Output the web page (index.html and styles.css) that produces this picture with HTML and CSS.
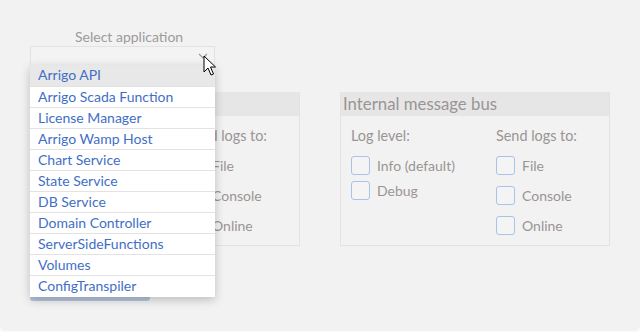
FILE: index.html
```html
<!DOCTYPE html>
<html lang="en">
<head>
    <meta charset="UTF-8">
    <title>Logging settings</title>
    <link rel="stylesheet" href="styles.css">
</head>
<body>
    <div class="page">
        <div class="app-field">
            <div class="app-label">Select application</div>
            <div class="app-select">
                <svg class="chevron" width="10" height="6" viewBox="0 0 10 6"><path d="M1 1 L5 5 L9 1" fill="none" stroke="#9a9a9a" stroke-width="1.2"/></svg>
            </div>
            <ul class="app-list">
                <li class="active">Arrigo API</li>
                <li>Arrigo Scada Function</li>
                <li>License Manager</li>
                <li>Arrigo Wamp Host</li>
                <li>Chart Service</li>
                <li>State Service</li>
                <li>DB Service</li>
                <li>Domain Controller</li>
                <li>ServerSideFunctions</li>
                <li>Volumes</li>
                <li>ConfigTranspiler</li>
            </ul>
            <svg class="cursor" width="14" height="22" viewBox="0 0 14 22"><path d="M1 1 L1 17 L5 13 L8 20 L10.5 19 L7.5 12 L12.5 12 Z" fill="#fff" stroke="#000" stroke-width="1" stroke-linejoin="round"/></svg>
        </div>

        <div class="panels">
            <div class="panel">
                <div class="panel-head">Application</div>
                <div class="panel-body">
                    <div class="col">
                        <div class="col-title">Log level:</div>
                        <label class="check tight"><span class="box"></span>Info (default)</label>
                        <label class="check tight"><span class="box"></span>Debug</label>
                    </div>
                    <div class="col">
                        <div class="col-title">Send logs to:</div>
                        <label class="check"><span class="box"></span>File</label>
                        <label class="check"><span class="box"></span>Console</label>
                        <label class="check"><span class="box"></span>Online</label>
                    </div>
                </div>
            </div>
            <div class="panel">
                <div class="panel-head">Internal message bus</div>
                <div class="panel-body">
                    <div class="col">
                        <div class="col-title">Log level:</div>
                        <label class="check tight"><span class="box"></span>Info (default)</label>
                        <label class="check tight"><span class="box"></span>Debug</label>
                    </div>
                    <div class="col">
                        <div class="col-title">Send logs to:</div>
                        <label class="check"><span class="box"></span>File</label>
                        <label class="check"><span class="box"></span>Console</label>
                        <label class="check"><span class="box"></span>Online</label>
                    </div>
                </div>
            </div>
        </div>

        <button class="save">Save</button>
    </div>
</body>
</html>
```

FILE: styles.css
```css
body {
    margin: 0;
    background: #fafafa;
    font-family: Lato, "Open Sans", sans-serif;
}
.page {
    position: relative;
    box-sizing: border-box;
    width: 640px;
    height: 331px;
    padding: 29px 30px 0;
    background: #f2f2f2;
    border-radius: 0 0 6px 6px;
}
.app-field {
    position: relative;
    width: 185px;
}
.app-label {
    padding-left: 45px;
    font-size: 14px;
    line-height: 16px;
    color: #9b9b9b;
}
.app-select {
    position: relative;
    box-sizing: border-box;
    height: 20px;
    margin-top: 1px;
    border: 1px solid #e2e2e2;
    background: #f3f3f3;
}
.chevron {
    position: absolute;
    right: 6px;
    top: 6px;
}
.app-list {
    position: absolute;
    z-index: 2;
    top: 36px;
    left: 0;
    width: 185px;
    margin: 0;
    padding: 0;
    list-style: none;
    background: #fff;
    box-shadow: 0 3px 9px rgba(0, 0, 0, 0.22);
}
.app-list li {
    height: 20px;
    padding-left: 8px;
    border-bottom: 1px solid #e3e3e3;
    font-size: 14px;
    line-height: 20px;
    color: #3f6fc6;
}
.app-list li:last-child {
    height: 21px;
    border-bottom: none;
}
.app-list li.active {
    height: 21px;
    background: #e8e8e8;
}
.cursor {
    position: absolute;
    z-index: 3;
    left: 173px;
    top: 26px;
}
.panels {
    display: flex;
    gap: 40px;
    margin-top: 26px;
}
.panel {
    width: 270px;
    border: 1px solid #e2e2e2;
    border-top: none;
}
.panel-head {
    height: 24px;
    padding-left: 2px;
    background: #e6e6e6;
    font-size: 16.8px;
    line-height: 24px;
    color: #9a9594;
}
.panel-body {
    display: flex;
    padding: 12px 10px 11px;
}
.col {
    display: flex;
    flex-direction: column;
}
.col:first-child {
    width: 145px;
}
.col-title {
    font-size: 14.4px;
    line-height: 16px;
    color: #9a9594;
    margin-bottom: 12px;
}
.check {
    display: flex;
    align-items: center;
    gap: 7px;
    height: 18px;
    margin-bottom: 12px;
    font-size: 14px;
    color: #9a9594;
}
.check.tight {
    margin-bottom: 7px;
}
.col .check:last-child {
    margin-bottom: 0;
}
.box {
    box-sizing: border-box;
    width: 19px;
    height: 19px;
    border: 1px solid #a9c2e8;
    border-radius: 3px;
    background: #f4f4f4;
}
.save {
    display: block;
    width: 120px;
    height: 32px;
    margin-top: 23px;
    border: none;
    border-radius: 3px;
    background: #b6c5de;
    color: #fff;
    font-family: inherit;
    font-size: 13px;
}
```
